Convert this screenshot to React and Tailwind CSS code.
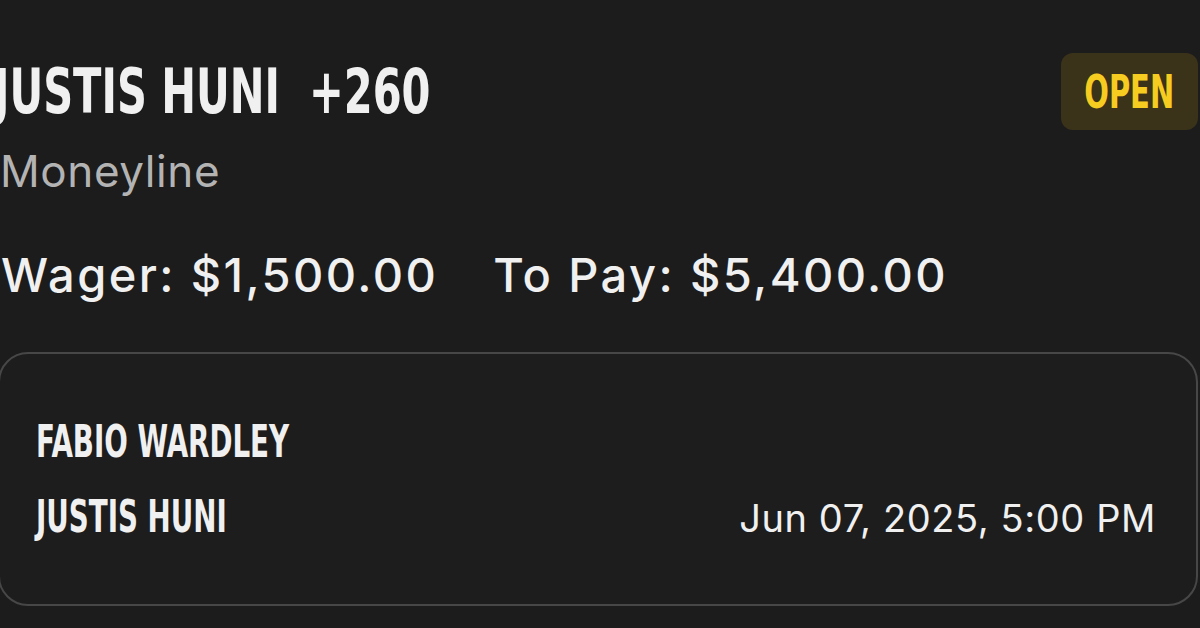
import React from "react";

const narrow = "font-['Liberation_Sans_Narrow','DejaVu_Sans_Condensed',sans-serif]";
const sans = "font-['Inter','Liberation_Sans',sans-serif]";

export default function App() {
  return (
    <div className="w-[1200px] h-[628px] overflow-hidden bg-[#1c1c1c] text-[#f0f0f0]">
      <div className="flex items-center justify-between pt-[53px] pr-[2px]">
        <h1
          className={`${narrow} -ml-[6px] inline-block origin-left scale-x-[0.745] whitespace-pre text-[62px] font-bold leading-none`}
        >
          JUSTIS HUNI  +260
        </h1>
        <div className="flex h-[77px] w-[137px] items-center justify-center rounded-[12px] bg-[#3a3219]">
          <span className={`${narrow} inline-block scale-x-[0.7] text-[46px] font-bold leading-none text-[#f5cc1f]`}>
            OPEN
          </span>
        </div>
      </div>

      <div className={`${sans} mt-[19px] text-[44px] leading-none tracking-[0.6px] text-[#b3b3b3]`}>Moneyline</div>

      <div className={`${sans} mt-[58px] flex gap-[55px] pl-[1px] text-[47px] font-medium leading-none tracking-[2.4px]`}>
        <span>Wager: $1,500.00</span>
        <span>To Pay: $5,400.00</span>
      </div>

      <div className="-ml-[2px] mr-[2px] mt-[54px] h-[254px] rounded-[30px] border-2 border-[#474747] bg-[#1d1d1d] pl-[36px] pr-[40px] pt-[66px]">
        <div className={`${narrow} inline-block origin-left scale-x-[0.7] text-[44px] font-bold leading-none`}>
          FABIO WARDLEY
        </div>
        <div className="mt-[31px] flex items-baseline justify-between">
          <span className={`${narrow} inline-block origin-left scale-x-[0.7] text-[44px] font-bold leading-none`}>
            JUSTIS HUNI
          </span>
          <span className={`${sans} text-[38px] leading-none tracking-[0.6px]`}>Jun 07, 2025, 5:00 PM</span>
        </div>
      </div>
    </div>
  );
}
